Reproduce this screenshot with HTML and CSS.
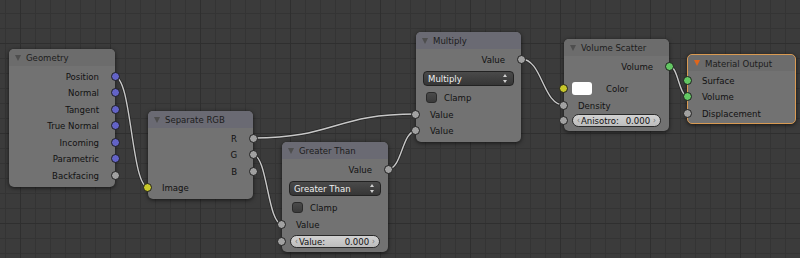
FILE: index.html
```html
<!DOCTYPE html>
<html lang="en">
<head>
    <meta charset="UTF-8">
    <title>Node Editor</title>
    <link rel="stylesheet" href="styles.css">
</head>
<body>
    <div class="editor">
        <svg class="wires" width="800" height="258" viewBox="0 0 800 258">
            <g class="wire-outline">
                <path d="M115 77 C131.5 77 131.5 187 148 187"/>
                <path d="M253 138 C334.5 138 334.5 114 416 114"/>
                <path d="M253 155 C267.5 155 267.5 224 282 224"/>
                <path d="M388 169 C402 169 402 131 416 131"/>
                <path d="M521 59 C542.5 59 542.5 105 564 105"/>
                <path d="M669 66 C678.5 66 678.5 96 688 96"/>
            </g>
            <g class="wire-line">
                <path d="M115 77 C131.5 77 131.5 187 148 187"/>
                <path d="M253 138 C334.5 138 334.5 114 416 114"/>
                <path d="M253 155 C267.5 155 267.5 224 282 224"/>
                <path d="M388 169 C402 169 402 131 416 131"/>
                <path d="M521 59 C542.5 59 542.5 105 564 105"/>
                <path d="M669 66 C678.5 66 678.5 96 688 96"/>
            </g>
        </svg>

        <!-- Geometry -->
        <div class="node node-geometry">
            <div class="node-header"><span class="collapse"></span>Geometry</div>
            <div class="node-body">
                <div class="row out">Position<span class="socket vector"></span></div>
                <div class="row out">Normal<span class="socket vector"></span></div>
                <div class="row out">Tangent<span class="socket vector"></span></div>
                <div class="row out">True Normal<span class="socket vector"></span></div>
                <div class="row out">Incoming<span class="socket vector"></span></div>
                <div class="row out">Parametric<span class="socket vector"></span></div>
                <div class="row out">Backfacing<span class="socket float"></span></div>
            </div>
        </div>

        <!-- Separate RGB -->
        <div class="node node-separate converter">
            <div class="node-header"><span class="collapse"></span>Separate RGB</div>
            <div class="node-body">
                <div class="row out">R<span class="socket float"></span></div>
                <div class="row out">G<span class="socket float"></span></div>
                <div class="row out">B<span class="socket float"></span></div>
                <div class="row in"><span class="socket color"></span>Image</div>
            </div>
        </div>

        <!-- Greater Than -->
        <div class="node node-greater converter">
            <div class="node-header"><span class="collapse"></span>Greater Than</div>
            <div class="node-body">
                <div class="row out">Value<span class="socket float"></span></div>
                <div class="select">Greater Than<span class="select-arrows"></span></div>
                <div class="row check"><span class="checkbox"></span>Clamp</div>
                <div class="row in"><span class="socket float"></span>Value</div>
                <div class="row field-row">
                    <span class="socket float"></span>
                    <div class="field"><span class="field-arrow">‹</span><span class="field-label">Value:</span><span class="field-value">0.000</span><span class="field-arrow">›</span></div>
                </div>
            </div>
        </div>

        <!-- Multiply -->
        <div class="node node-multiply converter">
            <div class="node-header"><span class="collapse"></span>Multiply</div>
            <div class="node-body">
                <div class="row out">Value<span class="socket float"></span></div>
                <div class="select">Multiply<span class="select-arrows"></span></div>
                <div class="row check"><span class="checkbox"></span>Clamp</div>
                <div class="row in"><span class="socket float"></span>Value</div>
                <div class="row in"><span class="socket float"></span>Value</div>
            </div>
        </div>

        <!-- Volume Scatter -->
        <div class="node node-scatter">
            <div class="node-header"><span class="collapse"></span>Volume Scatter</div>
            <div class="node-body">
                <div class="row out">Volume<span class="socket shader"></span></div>
                <div class="row in color-row"><span class="socket color"></span><span class="swatch"></span>Color</div>
                <div class="row in"><span class="socket float"></span>Density</div>
                <div class="row field-row">
                    <span class="socket float"></span>
                    <div class="field"><span class="field-arrow">‹</span><span class="field-label">Anisotro:</span><span class="field-value">0.000</span><span class="field-arrow">›</span></div>
                </div>
            </div>
        </div>

        <!-- Material Output -->
        <div class="node node-output active">
            <div class="node-header"><span class="collapse"></span>Material Output</div>
            <div class="node-body">
                <div class="row in"><span class="socket shader"></span>Surface</div>
                <div class="row in"><span class="socket shader"></span>Volume</div>
                <div class="row in"><span class="socket float"></span>Displacement</div>
            </div>
        </div>
    </div>
</body>
</html>
```

FILE: styles.css
```css
body {
    margin: 0;
    background-color: #3a3a3a;
    font-family: "DejaVu Sans Condensed", "Liberation Sans", sans-serif;
    font-size: 9.5px;
}

.editor {
    position: relative;
    width: 800px;
    height: 258px;
    overflow: hidden;
    background-color: #3b3b3b;
    background-image:
        linear-gradient(to right, #2f2f2f 1px, transparent 1px),
        linear-gradient(to bottom, #2f2f2f 1px, transparent 1px),
        linear-gradient(to right, #343434 1px, transparent 1px),
        linear-gradient(to bottom, #343434 1px, transparent 1px);
    background-size: 90px 90px, 90px 90px, 15px 15px, 15px 15px;
    background-position: 20px 0, 0 43px, 5px 0, 0 13px;
}

.wires {
    position: absolute;
    left: 0;
    top: 0;
    z-index: 0;
}

.wire-outline path {
    fill: none;
    stroke: #262626;
    stroke-width: 3;
}

.wire-line path {
    fill: none;
    stroke: #c8c8c8;
    stroke-width: 1.4;
}

/* nodes */

.node {
    position: absolute;
    z-index: 1;
    background-color: #727272;
    border-radius: 5px;
    box-shadow: 0 1px 4px rgba(0, 0, 0, 0.65);
    color: #111;
}

.node-header {
    height: 17px;
    display: flex;
    align-items: center;
    gap: 5px;
    padding-left: 6px;
    background-color: #6c6c6c;
    border-radius: 5px 5px 0 0;
    color: #1c1c1c;
}

.converter .node-header {
    background-color: #6a6a73;
}

.collapse {
    width: 0;
    height: 0;
    border-left: 3.5px solid transparent;
    border-right: 3.5px solid transparent;
    border-top: 6px solid #4e4e4e;
}

.node-body {
    padding: 2px 0 3px;
}

.row {
    position: relative;
    height: 16.5px;
    display: flex;
    align-items: center;
}

.row.out {
    justify-content: flex-end;
    padding-right: 16px;
}

.row.in {
    padding-left: 14px;
}

.row.check {
    padding-left: 10px;
    gap: 7px;
}

/* sockets */

.socket {
    position: absolute;
    top: calc(50% - 4.5px);
    width: 7px;
    height: 7px;
    border-radius: 50%;
    border: 1px solid #1e1e1e;
}

.out .socket {
    right: -5px;
}

.in .socket,
.field-row .socket {
    left: -5px;
}

.socket.vector {
    background-color: #6363c7;
}

.socket.float {
    background-color: #a1a1a1;
}

.socket.color {
    background-color: #c7c729;
}

.socket.shader {
    background-color: #63c763;
}

/* widgets */

.select {
    position: relative;
    height: 13px;
    margin: 3px 7px 4px;
    display: flex;
    align-items: center;
    padding-left: 4px;
    background: linear-gradient(#4a4a4a, #363636);
    border: 1px solid #222;
    border-radius: 4px;
    color: #f0f0f0;
}

.select-arrows {
    position: absolute;
    right: 5px;
    top: 2px;
    width: 5px;
    height: 9px;
}

.select-arrows::before,
.select-arrows::after {
    content: "";
    position: absolute;
    left: 0;
    border-left: 2.5px solid transparent;
    border-right: 2.5px solid transparent;
}

.select-arrows::before {
    top: 0;
    border-bottom: 3.5px solid #d0d0d0;
}

.select-arrows::after {
    bottom: 0;
    border-top: 3.5px solid #d0d0d0;
}

.checkbox {
    width: 9px;
    height: 9px;
    border-radius: 3px;
    background: linear-gradient(#4a4a4a, #3a3a3a);
    border: 1px solid #2a2a2a;
}

.field-row {
    height: 14px;
    padding: 0 8px;
}

.node-greater .field-row {
    margin-top: 2px;
}

.field {
    flex: 1;
    height: 11px;
    display: flex;
    align-items: center;
    padding: 0 4px;
    background: linear-gradient(#d2d2d2, #bdbdbd);
    border: 1px solid #2a2a2a;
    border-radius: 7px;
    color: #111;
}

.field-arrow {
    color: #6e6e6e;
    font-size: 8px;
}

.field-label {
    margin-left: 1px;
}

.field-value {
    margin-left: auto;
    margin-right: 3px;
}

.color-row {
    margin-top: 6px;
}

.swatch {
    width: 20px;
    height: 13px;
    margin-left: -6px;
    margin-right: 14px;
    background-color: #fff;
    border-radius: 3px;
}

/* placement on the canvas */

.node-geometry {
    left: 9px;
    top: 49px;
    width: 106px;
}

.node-separate {
    left: 148px;
    top: 111px;
    width: 105px;
}

.node-greater {
    left: 282px;
    top: 142px;
    width: 106px;
}

.node-multiply {
    left: 416px;
    top: 32px;
    width: 105px;
}

.node-scatter {
    left: 564px;
    top: 39px;
    width: 105px;
}

.node-output {
    left: 687px;
    top: 54px;
    width: 107px;
}

.node-output .node-header {
    height: 16px;
}

.node-output .node-body {
    padding: 1px 0 1px;
}

.node.active {
    border: 1px solid #d99a52;
}

.node-output .collapse {
    border-top-color: #e0661c;
}
```
